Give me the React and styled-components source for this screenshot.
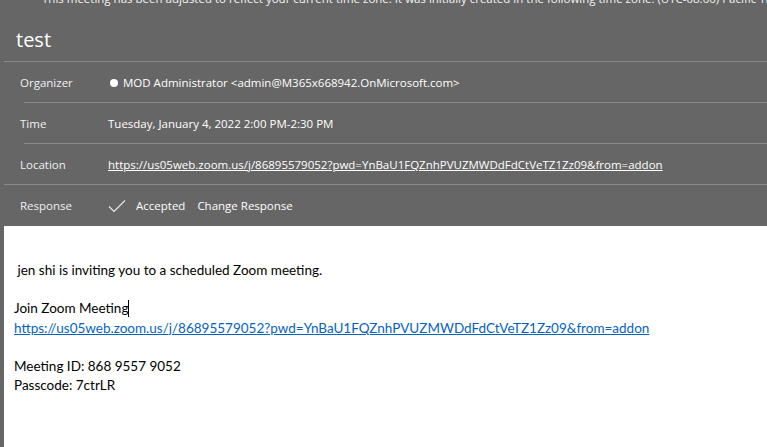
import styled, { createGlobalStyle } from "styled-components";

const Global = createGlobalStyle`
  html, body { margin: 0; padding: 0; }
  body { background: #666666; font-family: "Open Sans", "Noto Sans", sans-serif; }
`;

const Page = styled.div`
  width: 767px;
  height: 447px;
  overflow: hidden;
  background: #666666;
  display: flex;
  flex-direction: column;
`;

const Notice = styled.div`
  margin-top: -9px;
  padding-left: 42px;
  font-size: 11.5px;
  line-height: 16px;
  color: #f4f4f4;
  white-space: nowrap;
`;

const Title = styled.h1`
  margin: 0;
  padding: 19px 0 0 16px;
  height: 54px;
  box-sizing: border-box;
  font-size: 20px;
  font-weight: 400;
  line-height: 28px;
  color: #ffffff;
`;

const Details = styled.div`
  margin-left: 4px;
  border-top: 1px solid #8a8a8a;
`;

const Row = styled.div`
  display: flex;
  align-items: center;
  height: 41px;
  box-sizing: border-box;
  position: relative;
  font-size: 11.5px;
  color: #ffffff;
  &::after {
    content: "";
    position: absolute;
    left: ${(p) => (p.$inset ? "20px" : "0")};
    right: 0;
    bottom: 0;
    border-bottom: ${(p) => (p.$last ? "none" : "1px solid #8a8a8a")};
  }
`;

const Label = styled.div`
  width: 104px;
  padding-left: 16px;
  box-sizing: border-box;
  color: #f0f0f0;
  flex-shrink: 0;
`;

const Value = styled.div`
  display: flex;
  align-items: center;
  gap: ${(p) => p.$gap || 0}px;
  white-space: nowrap;
`;

const Dot = styled.span`
  width: 8px;
  height: 8px;
  border-radius: 50%;
  background: #ffffff;
  margin: 0 5px 0 2px;
`;

const HeaderLink = styled.a`
  color: #ffffff;
  text-decoration: underline;
`;

const Check = styled.svg`
  width: 18px;
  height: 14px;
  margin-right: 10px;
`;

const Body = styled.div`
  flex: 1;
  margin-left: 4px;
  background: #ffffff;
  padding: 35px 0 0 10px;
  font-family: "Lato", "Liberation Sans", sans-serif;
  font-size: 13.5px;
  line-height: 19.2px;
  color: #000000;
`;

const Line = styled.div`
  min-height: 19.2px;
  white-space: nowrap;
`;

const BodyLink = styled.a`
  color: #0563c1;
  text-decoration: underline;
`;

const Caret = styled.span`
  display: inline-block;
  width: 0;
  height: 17px;
  border-left: 1px solid #000;
  vertical-align: -4px;
`;

export default function App() {
  const url =
    "https://us05web.zoom.us/j/86895579052?pwd=YnBaU1FQZnhPVUZMWDdFdCtVeTZ1Zz09&from=addon";
  return (
    <Page>
      <Global />
      <Notice>
        This meeting has been adjusted to reflect your current time zone. It was initially created in the following time zone: (UTC-08:00) Pacific Time (US &amp; Canada).
      </Notice>
      <Title>test</Title>
      <Details>
        <Row $inset>
          <Label>Organizer</Label>
          <Value>
            <Dot />
            MOD Administrator &lt;admin@M365x668942.OnMicrosoft.com&gt;
          </Value>
        </Row>
        <Row $inset>
          <Label>Time</Label>
          <Value>Tuesday, January 4, 2022 2:00 PM-2:30 PM</Value>
        </Row>
        <Row>
          <Label>Location</Label>
          <Value>
            <HeaderLink>{url}</HeaderLink>
          </Value>
        </Row>
        <Row $last>
          <Label>Response</Label>
          <Value $gap={12}>
            <span style={{ display: "flex", alignItems: "center" }}>
              <Check viewBox="0 0 18 14">
                <path d="M1 7.5 L6 12.5 L17 1.5" fill="none" stroke="#e8e8e8" strokeWidth="1.1" />
              </Check>
              Accepted
            </span>
            <span>Change Response</span>
          </Value>
        </Row>
      </Details>
      <Body>
        <Line>&nbsp;jen shi is inviting you to a scheduled Zoom meeting.</Line>
        <Line />
        <Line>
          Join Zoom Meeting
          <Caret />
        </Line>
        <Line>
          <BodyLink>{url}</BodyLink>
        </Line>
        <Line />
        <Line>Meeting ID: 868 9557 9052</Line>
        <Line>Passcode: 7ctrLR</Line>
      </Body>
    </Page>
  );
}
